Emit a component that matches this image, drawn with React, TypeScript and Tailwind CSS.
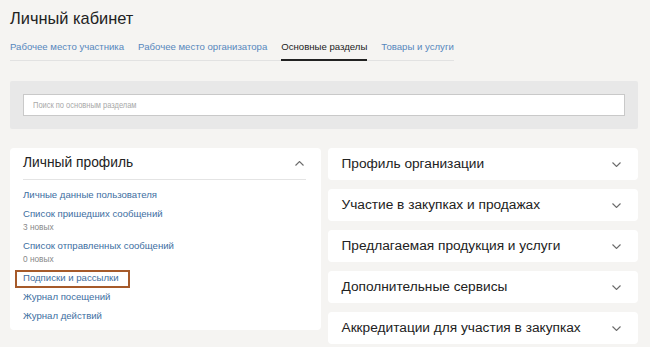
import React from "react";

const tabs = [
  { label: "Рабочее место участника", active: false },
  { label: "Рабочее место организатора", active: false },
  { label: "Основные разделы", active: true },
  { label: "Товары и услуги", active: false },
];

const sections = [
  "Профиль организации",
  "Участие в закупках и продажах",
  "Предлагаемая продукция и услуги",
  "Дополнительные сервисы",
  "Аккредитации для участия в закупках",
];

const links = [
  { label: "Личные данные пользователя" },
  { label: "Список пришедших сообщений", note: "3 новых" },
  { label: "Список отправленных сообщений", note: "0 новых" },
  { label: "Подписки и рассылки", marked: true },
  { label: "Журнал посещений" },
  { label: "Журнал действий" },
];

function Chevron({ up }: { up?: boolean }) {
  return (
    <svg width="9" height="5" viewBox="0 0 9 5" fill="none" className={up ? "rotate-180" : ""}>
      <polyline points="0.5,0.5 4.5,4.5 8.5,0.5" stroke="#6b6b6b" strokeWidth="1.1" />
    </svg>
  );
}

export default function App() {
  return (
    <div className="min-h-[347px] bg-[#f5f4f2] pl-[10px] pr-[12px] pt-[7px] font-['Liberation_Sans',Arial,sans-serif] text-[#222]">
      <h1 className="text-[16.4px] leading-[22px]">Личный кабинет</h1>

      <div className="mt-[11px] flex w-fit gap-[14px] border-b border-[#e2e2e2]">
        {tabs.map((t) => (
          <div
            key={t.label}
            className={
              "pb-[5px] text-[9.6px] leading-[14px] " +
              (t.active ? "-mb-px border-b-2 border-[#222] text-[#222]" : "text-[#5587bd]")
            }
          >
            {t.label}
          </div>
        ))}
      </div>

      <div className="mt-[20px] rounded-[2px] bg-[#e8e8e8] px-[13px] py-[13px]">
        <div className="flex h-[22px] items-center border border-[#c9c9c9] bg-white pl-[9px]">
          <span className="origin-left scale-x-[0.78] whitespace-nowrap text-[9.6px] text-[#a8a8a8]">
            Поиск по основным разделам
          </span>
        </div>
      </div>

      <div className="mt-[19px] grid grid-cols-2 items-start gap-[7px]">
        <div className="rounded-[4px] bg-white pb-[7px] pl-[13px] pr-[15px]">
          <div className="flex h-[32px] items-center justify-between border-b border-[#e4e4e4]">
            <span className="text-[13.8px]">Личный профиль</span>
            <span className="mr-[2px]">
              <Chevron up />
            </span>
          </div>
          <div className="flex flex-col gap-[5px] pt-[8px]">
            {links.map((l) => (
              <div key={l.label}>
                <div className="relative w-fit text-[9.6px] leading-[14px] text-[#3d6e9f]">
                  {l.label}
                  {l.marked && (
                    <span className="absolute -bottom-[3px] -left-[8px] -right-[11px] -top-[1px] border-2 border-[#a65a2a]" />
                  )}
                </div>
                {l.note && <div className="text-[8.3px] leading-[13px] text-[#888]">{l.note}</div>}
              </div>
            ))}
          </div>
        </div>

        <div className="flex flex-col gap-[9px]">
          {sections.map((s) => (
            <div
              key={s}
              className="flex h-[32px] items-center justify-between rounded-[4px] bg-white pl-[14px] pr-[17px]"
            >
              <span className="text-[13.7px]">{s}</span>
              <Chevron />
            </div>
          ))}
        </div>
      </div>
    </div>
  );
}
